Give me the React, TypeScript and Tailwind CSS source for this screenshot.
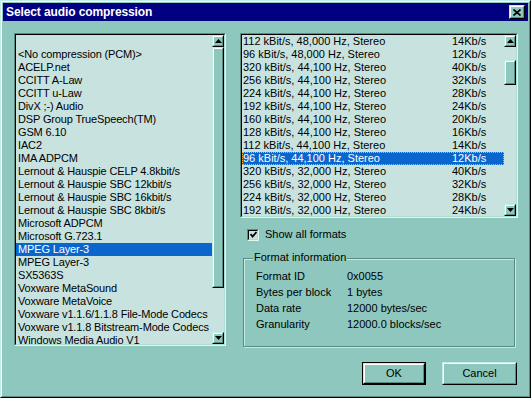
import React from "react";

const codecs = [
  "",
  "<No compression (PCM)>",
  "ACELP.net",
  "CCITT A-Law",
  "CCITT u-Law",
  "DivX ;-) Audio",
  "DSP Group TrueSpeech(TM)",
  "GSM 6.10",
  "IAC2",
  "IMA ADPCM",
  "Lernout & Hauspie CELP 4.8kbit/s",
  "Lernout & Hauspie SBC 12kbit/s",
  "Lernout & Hauspie SBC 16kbit/s",
  "Lernout & Hauspie SBC 8kbit/s",
  "Microsoft ADPCM",
  "Microsoft G.723.1",
  "MPEG Layer-3",
  "MPEG Layer-3",
  "SX5363S",
  "Voxware MetaSound",
  "Voxware MetaVoice",
  "Voxware v1.1.6/1.1.8 File-Mode Codecs",
  "Voxware v1.1.8 Bitstream-Mode Codecs",
  "Windows Media Audio V1",
];

const formats: [string, string][] = [
  ["112 kBit/s, 48,000 Hz, Stereo", "14Kb/s"],
  ["96 kBit/s, 48,000 Hz, Stereo", "12Kb/s"],
  ["320 kBit/s, 44,100 Hz, Stereo", "40Kb/s"],
  ["256 kBit/s, 44,100 Hz, Stereo", "32Kb/s"],
  ["224 kBit/s, 44,100 Hz, Stereo", "28Kb/s"],
  ["192 kBit/s, 44,100 Hz, Stereo", "24Kb/s"],
  ["160 kBit/s, 44,100 Hz, Stereo", "20Kb/s"],
  ["128 kBit/s, 44,100 Hz, Stereo", "16Kb/s"],
  ["112 kBit/s, 44,100 Hz, Stereo", "14Kb/s"],
  ["96 kBit/s, 44,100 Hz, Stereo", "12Kb/s"],
  ["320 kBit/s, 32,000 Hz, Stereo", "40Kb/s"],
  ["256 kBit/s, 32,000 Hz, Stereo", "32Kb/s"],
  ["224 kBit/s, 32,000 Hz, Stereo", "28Kb/s"],
  ["192 kBit/s, 32,000 Hz, Stereo", "24Kb/s"],
];

const info: [string, string][] = [
  ["Format ID", "0x0055"],
  ["Bytes per block", "1 bytes"],
  ["Data rate", "12000 bytes/sec"],
  ["Granularity", "12000.0 blocks/sec"],
];

function Raised({ className = "", children }: { className?: string; children?: React.ReactNode }) {
  return (
    <div className={`border border-t-[#c4ece4] border-l-[#c4ece4] border-r-black border-b-black ${className}`}>
      <div className="w-full h-full border border-t-white border-l-white border-r-[#5b8c84] border-b-[#5b8c84] bg-[#8ec7bd] flex items-center justify-center">
        {children}
      </div>
    </div>
  );
}

function Sunken({ className = "", children }: { className?: string; children?: React.ReactNode }) {
  return (
    <div className={`border border-t-[#5b8c84] border-l-[#5b8c84] border-r-[#e4f4f0] border-b-[#e4f4f0] ${className}`}>
      <div className="w-full h-full border border-t-black border-l-black border-r-[#b0dcd2] border-b-[#b0dcd2] bg-[#c8e3df] flex overflow-hidden">
        {children}
      </div>
    </div>
  );
}

function Arrow({ down }: { down?: boolean }) {
  return (
    <svg width="7" height="4" viewBox="0 0 7 4">
      <polygon points={down ? "0,0 7,0 3.5,4" : "3.5,0 7,4 0,4"} fill="black" />
    </svg>
  );
}

function ScrollBar({ before, thumb }: { before: string; thumb: string }) {
  return (
    <div className="w-[12px] h-full flex flex-col shrink-0">
      <Raised className="h-[12px] w-[12px] shrink-0">
        <Arrow />
      </Raised>
      <div className="flex-1 flex flex-col bg-[#c8e3df]">
        <div className={before} />
        <Raised className={`w-[12px] ${thumb}`} />
      </div>
      <Raised className="h-[12px] w-[12px] shrink-0">
        <Arrow down />
      </Raised>
    </div>
  );
}

export default function App() {
  return (
    <div
      className="w-[531px] h-[398px] border border-t-[#c4ece4] border-l-[#c4ece4] border-r-black border-b-black text-[11px] text-black"
      style={{ fontFamily: '"Liberation Sans", Arial, sans-serif' }}
    >
      <div className="w-full h-full border border-t-white border-l-white border-r-[#5b8c84] border-b-[#5b8c84] bg-[#8ec7bd] p-[1px]">
        {/* title bar */}
        <div className="h-[18px] bg-[#000080] flex items-center justify-between pl-[3px] pr-[3px]">
          <span className="text-white font-bold text-[12px] leading-[18px] tracking-[-0.1px]">Select audio compression</span>
          <Raised className="w-[16px] h-[14px]">
            <svg width="8" height="7" viewBox="0 0 8 7">
              <path d="M0.5 0.5 L7.5 6.5 M7.5 0.5 L0.5 6.5" stroke="black" strokeWidth="1.6" />
            </svg>
          </Raised>
        </div>

        <div className="flex items-start gap-[14px] pl-[11px] pr-[10px] pt-[12px]">
          {/* codec list */}
          <Sunken className="w-[212px] h-[313px] shrink-0">
            <div className="flex-1 overflow-hidden tracking-[-0.15px]">
              {codecs.map((c, i) => (
                <div
                  key={i}
                  className={`h-[13px] leading-[13px] pl-[2px] whitespace-nowrap ${i === 16 ? "bg-[#0a66cc] text-white" : ""}`}
                >
                  {c}
                </div>
              ))}
            </div>
            <ScrollBar before="h-0" thumb="h-[241px]" />
          </Sunken>

          {/* right column */}
          <div className="w-[278px] flex flex-col">
            <Sunken className="h-[185px]">
              <div className="flex-1 overflow-hidden">
                {formats.map(([f, r], i) => (
                  <div
                    key={i}
                    className={`h-[13px] leading-[11px] flex whitespace-nowrap border border-dotted box-border ${
                      i === 9 ? "bg-[#0a66cc] text-white border-[#f5b040]" : "border-transparent"
                    }`}
                  >
                    <span className="w-[209px] shrink-0">{f}</span>
                    <span>{r}</span>
                  </div>
                ))}
              </div>
              <ScrollBar before="h-[13px]" thumb="h-[25px]" />
            </Sunken>

            <div className="mt-[10px] h-[13px] flex items-center pl-[7px] gap-[6px]">
              <Sunken className="w-[12px] h-[12px] shrink-0">
                <div className="w-full h-full flex items-center justify-center">
                  <svg width="7" height="7" viewBox="0 0 7 7">
                    <path d="M0.5 3 L2.5 5.5 L6.5 1" stroke="black" strokeWidth="1.8" fill="none" />
                  </svg>
                </div>
              </Sunken>
              <span className="leading-[13px]">Show all formats</span>
            </div>

            <div className="relative mt-[17px] mx-[3px] h-[89px] border border-[#5b8c84] shadow-[inset_1px_1px_0_#c4ece4,1px_1px_0_#c4ece4] pt-[9px] pl-[12px]">
              <span className="absolute left-[9px] top-[-8px] leading-[13px] px-[1px] bg-[#8ec7bd]">Format information</span>
              {info.map(([k, v]) => (
                <div key={k} className="h-[16px] leading-[16px] flex">
                  <span className="w-[91px] shrink-0">{k}</span>
                  <span>{v}</span>
                </div>
              ))}
            </div>
          </div>
        </div>

        {/* buttons */}
        <div className="flex justify-end gap-[16px] pr-[11px] mt-[15px]">
          <div className="w-[64px] h-[23px] border border-black">
            <Raised className="w-full h-full">
              <span className="leading-[13px]">OK</span>
            </Raised>
          </div>
          <Raised className="w-[75px] h-[23px]">
            <span className="leading-[13px]">Cancel</span>
          </Raised>
        </div>
      </div>
    </div>
  );
}
